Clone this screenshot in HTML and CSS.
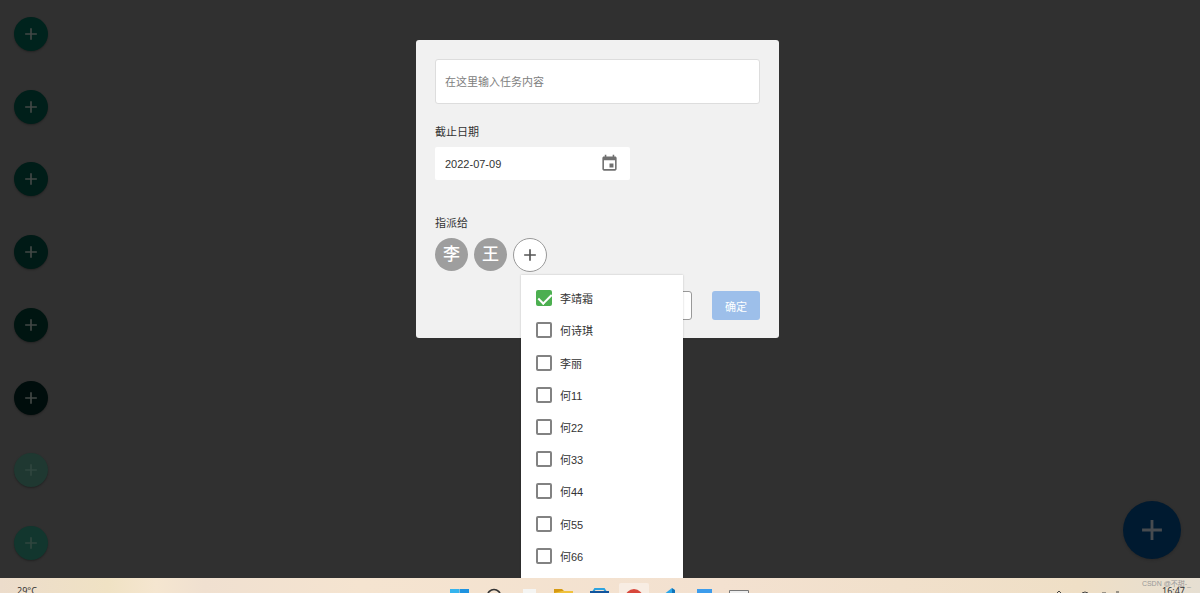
FILE: index.html
```html
<!DOCTYPE html>
<html lang="zh-CN">
<head>
  <meta charset="UTF-8">
  <title>新建任务</title>
  <link rel="stylesheet" href="styles.css">
</head>
<body>
  <svg class="symbols">
    <symbol id="plus" viewBox="0 0 24 24"><path d="M19 13h-6v6h-2v-6H5v-2h6V5h2v6h6z"/></symbol>
  </svg>

  <div class="main">
    <!-- 左侧按钮 -->
    <div class="rail">
      <button class="round c1"><svg><use href="#plus"/></svg></button>
      <button class="round c2"><svg><use href="#plus"/></svg></button>
      <button class="round c3"><svg><use href="#plus"/></svg></button>
      <button class="round c4"><svg><use href="#plus"/></svg></button>
      <button class="round c5"><svg><use href="#plus"/></svg></button>
      <button class="round c6"><svg><use href="#plus"/></svg></button>
      <button class="round c7"><svg><use href="#plus"/></svg></button>
      <button class="round c8"><svg><use href="#plus"/></svg></button>
    </div>
    <button class="fab"><svg><use href="#plus"/></svg></button>

    <!-- 新建任务 -->
    <div class="overlay">
      <form class="dialog">
        <input class="task-input" type="text" placeholder="在这里输入任务内容">

        <label class="label" for="date">截止日期</label>
        <div class="date-box">
          <input type="text" id="date" value="2022-07-09">
          <svg viewBox="0 0 24 24"><path d="M17 12h-5v5h5v-5zM16 1v2H8V1H6v2H5c-1.110 0-2 .9-2 2v14c0 1.100.890 2 2 2h14c1.100 0 2-.9 2-2V5c0-1.100-.9-2-2-2h-1V1h-2zm3 18H5V8h14v11z"/></svg>
        </div>

        <div class="label">指派给</div>
        <div class="people">
          <span class="avatar">李</span>
          <span class="avatar">王</span>
          <button type="button" class="add"><svg><use href="#plus"/></svg></button>
        </div>

        <div class="actions">
          <button type="button" class="btn cancel"></button>
          <button type="button" class="btn ok">确定</button>
        </div>
      </form>

      <div class="menu">
        <label><input type="checkbox" checked>李靖霜</label>
        <label><input type="checkbox">何诗琪</label>
        <label><input type="checkbox">李丽</label>
        <label><input type="checkbox">何11</label>
        <label><input type="checkbox">何22</label>
        <label><input type="checkbox">何33</label>
        <label><input type="checkbox">何44</label>
        <label><input type="checkbox">何55</label>
        <label><input type="checkbox">何66</label>
      </div>
    </div>
  </div>

  <!-- 任务栏 -->
  <div class="taskbar">
    <span class="temp">29°C</span>
    <div class="apps">
      <svg viewBox="0 0 30 30"><path fill="#35b4ee" d="M6 6h9v9H6z"/><path fill="#1e93e0" d="M15.500 6H25v9h-9.500z"/></svg>
      <svg viewBox="0 0 30 30"><circle cx="15" cy="13" r="6.500" fill="none" stroke="#333" stroke-width="1.600"/></svg>
      <svg viewBox="0 0 30 30"><path fill="#f5f5f3" d="M9 6h13v12H9z"/></svg>
      <svg viewBox="0 0 30 30"><path fill="#d69a12" d="M5 6h8l2 2v8H5z"/><path fill="#f0c23c" d="M5 10l8-2h11v10H5z"/></svg>
      <svg viewBox="0 0 30 30"><path fill="none" stroke="#2da3df" stroke-width="2" d="M9 9l2-3h9l2 3"/><path fill="#12549c" d="M6 8h19v10H6z"/></svg>
      <svg class="active" viewBox="0 0 30 30"><circle cx="15" cy="15" r="9" fill="#d8483c"/></svg>
      <svg viewBox="0 0 30 30"><path fill="#2aa6ea" d="M9 12l9-7v13H9z"/><path fill="#1173b8" d="M18 5l3 2v11h-3z"/></svg>
      <svg viewBox="0 0 30 30"><path fill="#3c9cec" d="M8 6h15v12H8z"/></svg>
      <svg viewBox="0 0 30 30"><path fill="#eee" stroke="#777" d="M5.500 7.500h19v12h-19z"/></svg>
    </div>
    <div class="tray">
      <svg viewBox="0 0 70 15"><path fill="none" stroke="#444" stroke-width="1" d="M3 15l2-2 2 2M28 15q3-2 6 0M48 15h4M62 14h3"/></svg>
      <span class="time">16:47</span>
    </div>
    <span class="watermark">CSDN @不甜-_</span>
  </div>
</body>
</html>
```
FILE: styles.css
```css
* {
  box-sizing: border-box;
}
body {
  margin: 0;
  height: 100vh;
  display: flex;
  flex-direction: column;
  overflow: hidden;
  background-color: #303030;
  color: #333;
  font-family: "Liberation Sans", "Noto Sans CJK SC", sans-serif;
  font-size: 11px;
}
button, input {
  font: inherit;
  color: inherit;
  margin: 0;
  padding: 0;
  border: none;
}
.symbols {
  display: none;
}
.main {
  flex: 1;
  position: relative;
  min-height: 0;
  display: flex;
  justify-content: space-between;
}

/* 左侧按钮 */
.rail {
  display: flex;
  flex-direction: column;
  justify-content: space-between;
  padding: 17px 14px 18px;
}
.round, .fab, .add {
  display: flex;
  align-items: center;
  justify-content: center;
  border-radius: 50%;
}
.round {
  width: 34px;
  height: 34px;
  box-shadow: 0 1px 2px rgba(0,0,0,0.3);
}
.round svg, .add svg {
  width: 20px;
  height: 20px;
  fill: #424846;
}
.c1 { background-color: #00231d; }
.c2 { background-color: #001f1a; }
.c3 { background-color: #001d18; }
.c4 { background-color: #001a16; }
.c5 { background-color: #001511; }
.c6 { background-color: #000d0c; }
.c7 { background-color: #1f3831; }
.c8 { background-color: #12362e; }
.c7 svg, .c8 svg {
  fill: #30463f;
}
.fab {
  align-self: flex-end;
  width: 58px;
  height: 58px;
  margin: 19px;
  background-color: #001a30;
  box-shadow: 0 1px 3px rgba(0,0,0,0.2);
}
.fab svg {
  width: 34px;
  height: 34px;
  fill: #474b4f;
}

/* 弹窗 */
.overlay {
  position: absolute;
  inset: 0;
  padding: 40px 5px 0 0;
}
.dialog {
  width: 363px;
  margin: 0 auto;
  padding: 19px 19px 18px;
  background-color: #f1f1f1;
  border-radius: 3px;
}
.task-input {
  display: block;
  width: 100%;
  height: 45px;
  padding: 0 9px;
  border: 1px solid #ddd;
  border-radius: 3px;
  background-color: #fff;
}
.task-input::placeholder {
  color: #808080;
}
.label {
  display: block;
  margin-top: 20px;
  line-height: 16px;
}
.date-box {
  display: flex;
  align-items: center;
  width: 195px;
  height: 33px;
  margin: 7px 0 35px;
  padding: 0 11px 0 10px;
  background-color: #fff;
  border-radius: 2px;
}
.date-box input {
  flex: 1;
  min-width: 0;
  background: none;
}
.date-box svg {
  width: 19px;
  height: 19px;
  fill: #707070;
}
.people {
  display: flex;
  gap: 6px;
  margin-top: 7px;
}
.avatar {
  width: 33px;
  height: 33px;
  line-height: 33px;
  border-radius: 50%;
  background-color: #9e9e9e;
  color: #fff;
  font-size: 17px;
  font-weight: 500;
  text-align: center;
}
.add {
  width: 34px;
  height: 34px;
  background-color: #fff;
  border: 1px solid #999;
}
.add svg {
  fill: #555;
}
.actions {
  display: flex;
  justify-content: flex-end;
  gap: 20px;
  margin-top: 19px;
}
.btn {
  width: 48px;
  height: 29px;
  border-radius: 3px;
}
.cancel {
  background-color: #fff;
  border: 1px solid #999;
}
.ok {
  background-color: #9dbfea;
  color: #fff;
}

/* 人员下拉菜单 */
.menu {
  position: absolute;
  top: 275px;
  bottom: 0;
  left: calc(50% - 79px);
  width: 162px;
  display: flex;
  flex-direction: column;
  padding: 7px 15px 6px;
  background-color: #fff;
  box-shadow: 0 0 2px rgba(0,0,0,0.2);
}
.menu label {
  flex: 1;
  display: flex;
  align-items: center;
  gap: 8px;
}
.menu input {
  appearance: none;
  width: 16px;
  height: 16px;
  border: 2px solid #828282;
  border-radius: 2px;
  background-color: #fff;
}
.menu input:checked {
  position: relative;
  background-color: #4caf50;
  border-color: #4caf50;
}
.menu input:checked::after {
  content: "";
  position: absolute;
  left: 3px;
  top: -1px;
  width: 6px;
  height: 11px;
  border: solid #fff;
  border-width: 0 2px 2px 0;
  transform: rotate(45deg);
}

/* 任务栏 */
.taskbar {
  position: relative;
  display: grid;
  grid-template-columns: 1fr auto 1fr;
  height: 15px;
  overflow: hidden;
  background: linear-gradient(90deg, #ecdccb, #f0e2c4 9%, #f5e6d0 13%, #f0e0d0 17%, #f5e4d0 30%, #f3e1d0 60%, #efdfc6 90%, #e6dfd2);
  font-family: "Noto Sans", sans-serif;
  font-size: 9px;
  line-height: 12px;
}
.temp {
  padding: 7px 0 0 17px;
}
.apps {
  display: flex;
  gap: 5px;
  padding-right: 2px;
}
.apps svg {
  width: 30px;
  height: 30px;
  margin: 5px 0 0;
}
.apps .active {
  background-color: #f8ede3;
  border-radius: 2px;
}
.tray {
  display: flex;
  justify-content: flex-end;
  gap: 38px;
  padding-right: 15px;
}
.tray svg {
  width: 70px;
  height: 15px;
}
.time {
  padding-top: 7px;
}
.watermark {
  position: absolute;
  right: 9px;
  top: 0;
  font-family: "Liberation Sans", "Noto Sans CJK SC", sans-serif;
  font-size: 7px;
  color: #999;
}
```
